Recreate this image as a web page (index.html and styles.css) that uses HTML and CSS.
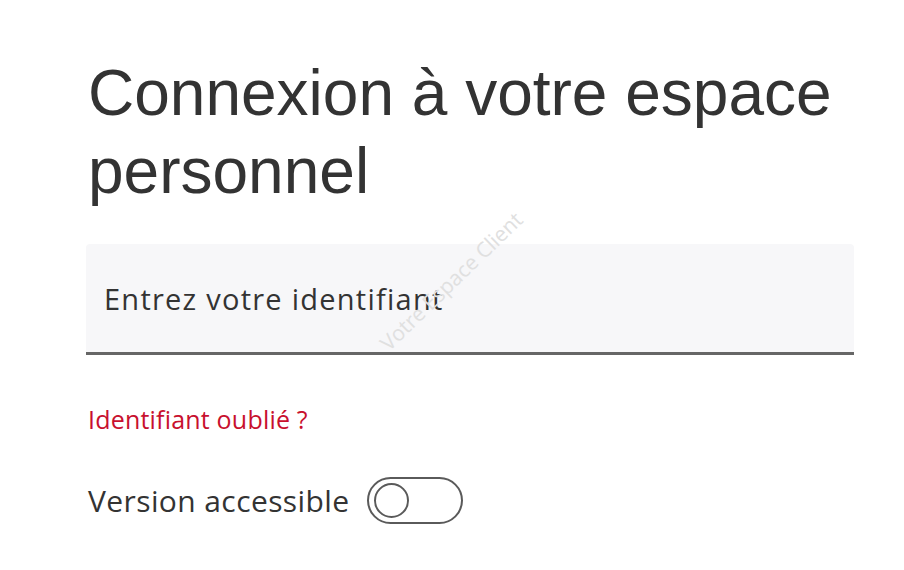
FILE: index.html
```html
<!DOCTYPE html>
<html lang="fr">
<head>
<meta charset="utf-8">
<title>Connexion</title>
<link rel="stylesheet" href="styles.css">
</head>
<body>
<main class="page">
  <h1 class="title">Connexion à votre espace personnel</h1>
  <div class="field">
    <span class="placeholder">Entrez votre identifiant</span>
  </div>
  <a class="forgot" href="#">Identifiant oublié ?</a>
  <div class="access">
    <span class="access-label">Version accessible</span>
    <span class="toggle"><span class="knob"></span></span>
  </div>
  <div class="watermark">Votre Espace Client</div>
</main>
</body>
</html>
```
FILE: styles.css
```css
html, body {
  margin: 0;
  padding: 0;
  background: #ffffff;
}
.page {
  position: relative;
  width: 904px;
  height: 570px;
  padding: 54px 50px 0 86px;
  box-sizing: border-box;
  font-family: "Open Sans", "Noto Sans", sans-serif;
  color: #333333;
  display: flex;
  flex-direction: column;
  align-items: flex-start;
}
.title {
  margin: 0 0 0 2px;
  font-family: "Liberation Sans", Arial, sans-serif;
  font-weight: 400;
  font-size: 64px;
  line-height: 78px;
  color: #333333;
  width: 760px;
}
.field {
  margin-top: 34px;
  width: 750px;
  height: 108px;
  background: #f7f7f9;
  border-radius: 4px 4px 0 0;
  border-bottom: 3px solid #666666;
  display: flex;
  align-items: center;
  padding-left: 18px;
}
.placeholder {
  font-size: 29px;
  letter-spacing: 1.25px;
  color: #333333;
}
.forgot {
  margin-top: 48px;
  margin-left: 2px;
  font-size: 25px;
  letter-spacing: 0.2px;
  color: #c8102e;
  text-decoration: none;
  line-height: 32px;
}
.access {
  margin-top: 42px;
  margin-left: 2px;
  display: flex;
  align-items: center;
  gap: 17px;
}
.access-label {
  font-size: 30px;
  letter-spacing: 0.4px;
  color: #333333;
}
.toggle {
  width: 87px;
  height: 43px;
  border: 2px solid #5a5a5a;
  border-radius: 24px;
  display: flex;
  align-items: center;
  padding-left: 5px;
}
.knob {
  width: 31px;
  height: 31px;
  border: 2px solid #5a5a5a;
  border-radius: 50%;
}
.watermark {
  position: absolute;
  left: 451px;
  top: 281px;
  font-size: 21px;
  color: #e0e0e0;
  transform: translate(-50%, -50%) rotate(-44deg);
  white-space: nowrap;
  pointer-events: none;
}
```
